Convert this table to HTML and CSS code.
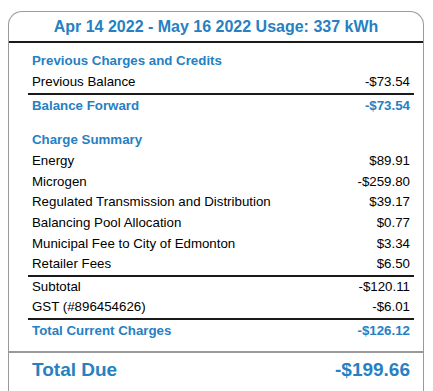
FILE: index.html
```html
<!DOCTYPE html>
<html>
<head>
<meta charset="utf-8">
<link rel="stylesheet" href="styles.css">
</head>
<body>
<div class="box">
  <div class="hdr">Apr 14 2022 - May 16 2022 Usage: 337 kWh</div>
  <div class="content">
    <div class="heading">Previous Charges and Credits</div>
    <div class="row"><span>Previous Balance</span><span>-$73.54</span></div>
    <div class="row total-row"><span>Balance Forward</span><span>-$73.54</span></div>

    <div class="heading second">Charge Summary</div>
    <div class="row"><span>Energy</span><span>$89.91</span></div>
    <div class="row"><span>Microgen</span><span>-$259.80</span></div>
    <div class="row"><span>Regulated Transmission and Distribution</span><span>$39.17</span></div>
    <div class="row"><span>Balancing Pool Allocation</span><span>$0.77</span></div>
    <div class="row"><span>Municipal Fee to City of Edmonton</span><span>$3.34</span></div>
    <div class="row"><span>Retailer Fees</span><span>$6.50</span></div>
    <div class="row ruled"><span>Subtotal</span><span>-$120.11</span></div>
    <div class="row"><span>GST (#896454626)</span><span>-$6.01</span></div>
    <div class="row total-row"><span>Total Current Charges</span><span>-$126.12</span></div>
  </div>
  <div class="due">
    <div class="due-row"><span>Total Due</span><span>-$199.66</span></div>
  </div>
</div>
</body>
</html>
```

FILE: styles.css
```css
html, body {
  margin: 0;
  padding: 0;
  background: #fff;
}
body {
  font-family: "Liberation Sans", Arial, sans-serif;
  color: #000;
}
.box {
  box-sizing: border-box;
  margin: 11px 0 0 8px;
  width: 416px;
  height: 380px;
  border: 1px solid #9a9a9a;
  border-bottom: 0;
  border-radius: 14px 14px 0 0;
}
.hdr {
  height: 29px;
  line-height: 30px;
  text-align: center;
  font-weight: bold;
  font-size: 16px;
  color: #2680c2;
  border-bottom: 2px solid #1a1a1a;
}
.content {
  padding: 7px 9px 9px 19px;
}
.heading {
  height: 22px;
  line-height: 22px;
  padding-left: 4px;
  font-weight: bold;
  font-size: 13.3px;
  color: #2680c2;
}
.heading.second {
  margin-top: 13px;
}
.row {
  display: flex;
  justify-content: space-between;
  height: 20.6px;
  line-height: 20.6px;
  padding: 0 4px;
  font-size: 13.3px;
}
.total-row {
  border-top: 2px solid #1a1a1a;
  padding-top: 1px;
  font-weight: bold;
  color: #2680c2;
}
.ruled {
  border-top: 2px solid #1a1a1a;
}
.due {
  border-top: 2px solid #9a9a9a;
  padding: 0 9px 0 19px;
}
.due-row {
  display: flex;
  justify-content: space-between;
  height: 33px;
  line-height: 33px;
  padding: 0 4px;
  font-weight: bold;
  font-size: 19px;
  color: #2680c2;
}
```
